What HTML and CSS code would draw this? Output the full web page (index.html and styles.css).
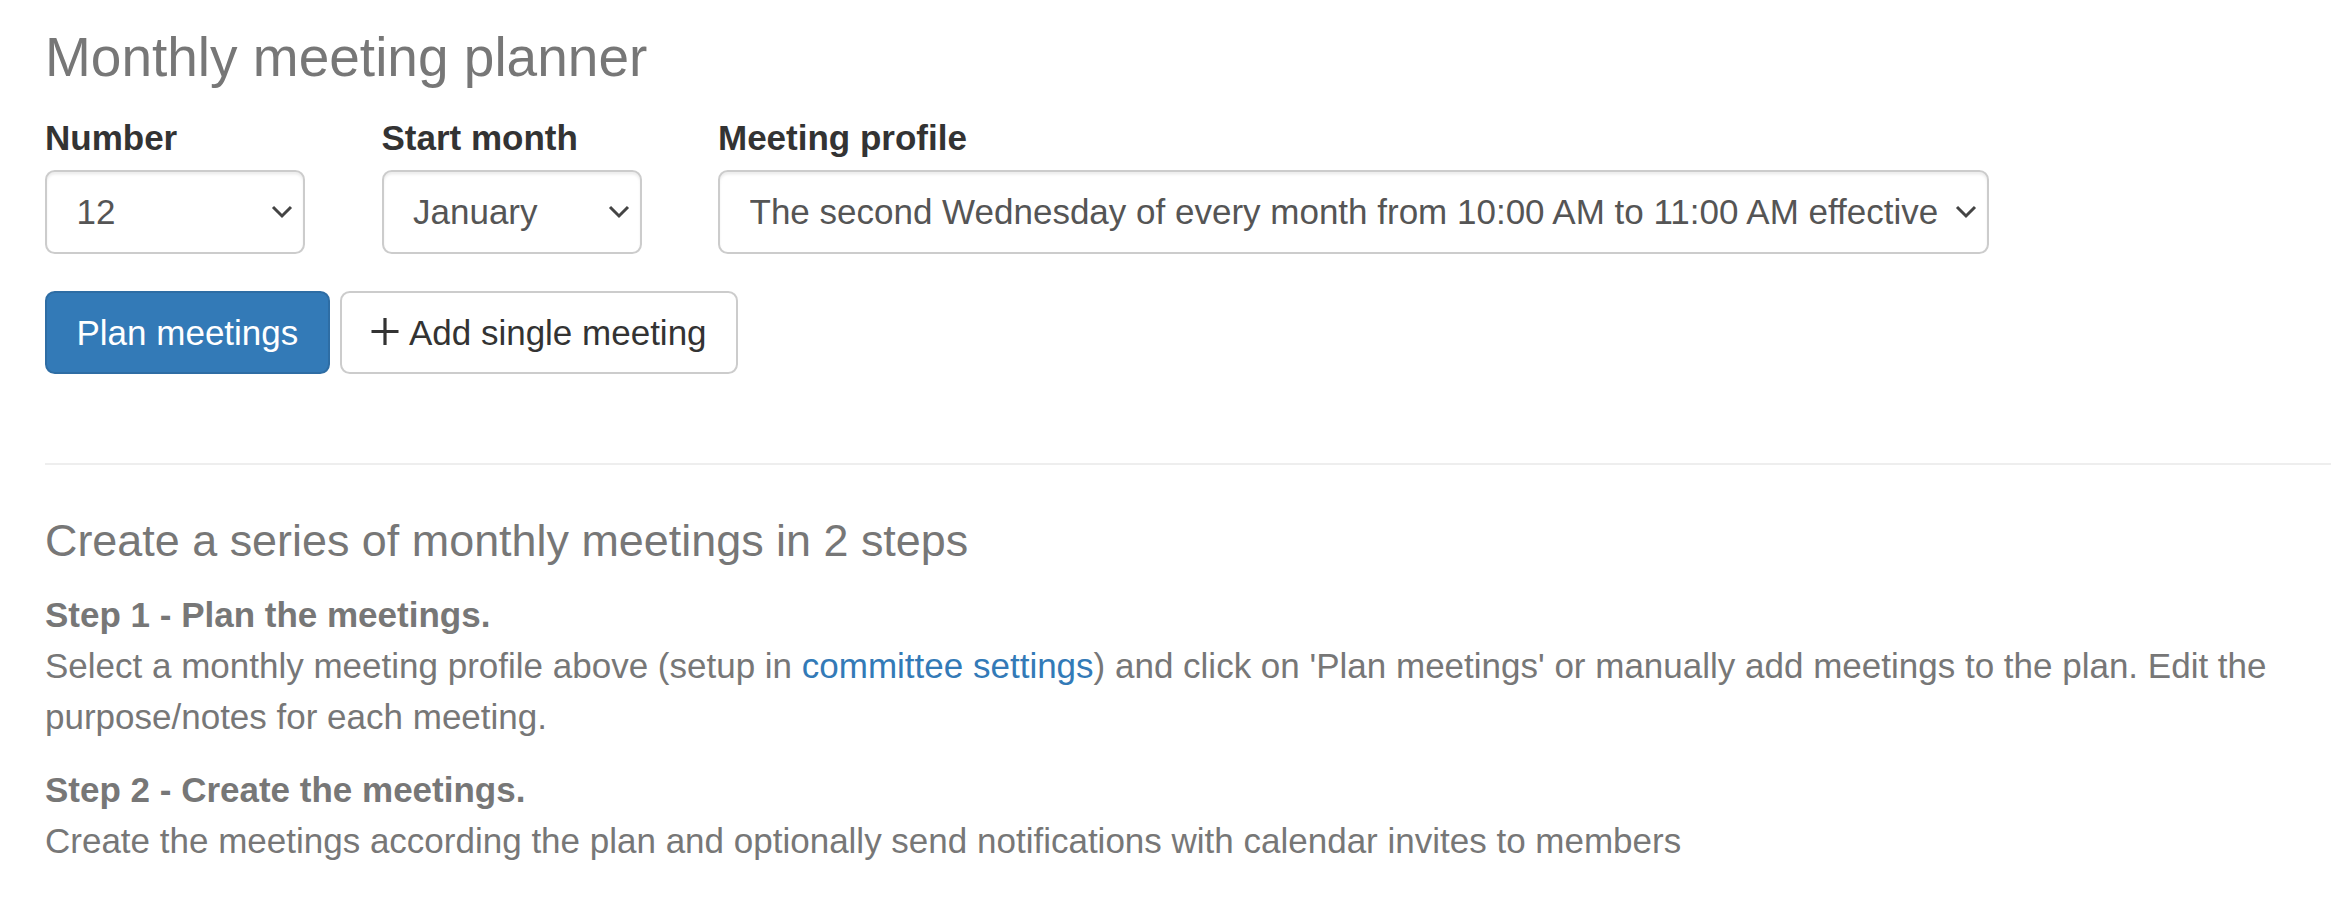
FILE: index.html
```html
<!DOCTYPE html>
<html lang="en">
<head>
    <meta charset="UTF-8">
    <title>Monthly meeting planner</title>
    <link rel="stylesheet" href="styles.css">
</head>
<body>

<div class="page">
    <h3 class="title">Monthly meeting planner</h3>

    <form class="planner-form">
        <div class="form-row">
            <!-- Number of meetings -->
            <div class="field">
                <label for="number">Number</label>
                <div class="select-wrap">
                    <select id="number" class="form-control small-select">
                        <option>12</option>
                    </select>
                    <svg class="chevron" width="22" height="14" viewBox="0 0 22 14"><polyline points="2,2 11,11 20,2"/></svg>
                </div>
            </div>

            <!-- Start month -->
            <div class="field">
                <label for="startMonth">Start month</label>
                <div class="select-wrap">
                    <select id="startMonth" class="form-control small-select">
                        <option>January</option>
                    </select>
                    <svg class="chevron" width="22" height="14" viewBox="0 0 22 14"><polyline points="2,2 11,11 20,2"/></svg>
                </div>
            </div>

            <!-- Meeting profile -->
            <div class="field">
                <label for="profile">Meeting profile</label>
                <div class="select-wrap">
                    <select id="profile" class="form-control profile-select">
                        <option>The second Wednesday of every month from 10:00 AM to 11:00 AM effective</option>
                    </select>
                    <svg class="chevron" width="22" height="14" viewBox="0 0 22 14"><polyline points="2,2 11,11 20,2"/></svg>
                </div>
            </div>
        </div>

        <div class="actions">
            <button type="button" class="btn btn-primary">Plan meetings</button>
            <button type="button" class="btn btn-default"><svg class="plus" width="28" height="27" viewBox="0 0 28 27"><path d="M14 0 V27 M0.5 13.5 H27.5"/></svg>Add single meeting</button>
        </div>
    </form>

    <hr>

    <h4 class="subtitle">Create a series of monthly meetings in 2 steps</h4>
    <p class="step"><strong>Step 1 - Plan the meetings.</strong><br>
        Select a monthly meeting profile above (setup in <a href="#">committee settings</a>) and click on 'Plan meetings' or manually add meetings to the plan. Edit the purpose/notes for each meeting.</p>
    <p class="step"><strong>Step 2 - Create the meetings.</strong><br>
        Create the meetings according the plan and optionally send notifications with calendar invites to members</p>
</div>

</body>
</html>
```

FILE: styles.css
```css
body {
    margin: 0;
    font-family: "Liberation Sans", Arial, sans-serif;
    font-size: 35px;
    line-height: 50px;
    color: #333;
    background: #fff;
}
.page {
    padding: 0 0 40px 45px;
}
.title {
    margin: 26.7px 0 0;
    font-size: 55px;
    line-height: 60.5px;
    font-weight: normal;
    color: #777;
}
.form-row {
    display: flex;
    gap: 76.5px;
    margin-top: 30px;
}
label {
    display: block;
    font-weight: bold;
    line-height: 41.4px;
    margin-bottom: 11.5px;
    color: #333;
}
.select-wrap {
    position: relative;
}
.form-control {
    display: block;
    height: 83.6px;
    padding: 14.5px 29.5px;
    font-family: inherit;
    font-size: 35px;
    line-height: 49.6px;
    color: #555;
    background-color: #fff;
    border: 2.46px solid #ccc;
    border-radius: 9.8px;
    box-shadow: inset 0 2.5px 2.5px rgba(0, 0, 0, .075);
    appearance: none;
    -webkit-appearance: none;
    box-sizing: border-box;
}
.small-select {
    width: 260px;
}
.profile-select {
    width: 1271px;
}
.chevron {
    position: absolute;
    right: 12px;
    top: 35px;
    pointer-events: none;
}
.chevron polyline {
    fill: none;
    stroke: #444;
    stroke-width: 3;
}
.actions {
    display: flex;
    gap: 10px;
    margin-top: 37.4px;
}
.btn {
    display: inline-block;
    padding: 14.5px 29.5px;
    font-family: inherit;
    font-size: 35px;
    line-height: 49.6px;
    border: 2.46px solid transparent;
    border-radius: 9.8px;
    cursor: pointer;
    white-space: nowrap;
}
.btn-primary {
    color: #fff;
    background-color: #337ab7;
    border-color: #2e6da4;
}
.btn-default {
    color: #333;
    background-color: #fff;
    border-color: #ccc;
}
.plus {
    margin-right: 9.6px;
    vertical-align: baseline;
}
.plus path {
    stroke: #333;
    stroke-width: 3.2;
    fill: none;
}
hr {
    margin: 89px 0 0;
    border: 0;
    border-top: 2.46px solid #eee;
}
.subtitle {
    margin: 51px 0 24px;
    font-size: 44.9px;
    line-height: 49px;
    font-weight: normal;
    color: #777;
}
.step {
    margin: 0 0 22px;
    line-height: 51px;
    color: #777;
}
.step a {
    color: #337ab7;
    text-decoration: none;
}
```
